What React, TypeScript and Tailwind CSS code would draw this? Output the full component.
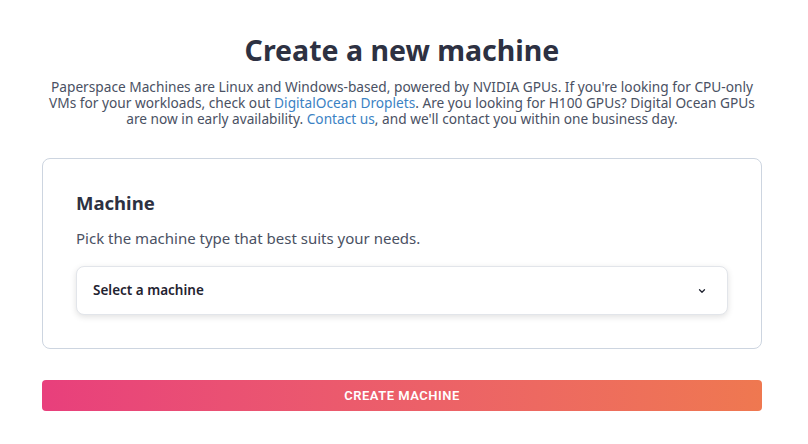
import React from "react";

export default function App() {
  return (
    <div className="min-h-[444px] w-[808px] bg-white" style={{ fontFamily: '"Noto Sans", "Open Sans", sans-serif' }}>
      <div className="ml-[42px] w-[720px] pt-[30px]">
        <h1 className="text-center text-[28.5px] leading-[40px] font-bold text-[#2d3142]">Create a new machine</h1>
        <p className="mt-[9px] text-center text-[13.7px] leading-[16px] text-[#4a5163]">
          Paperspace Machines are Linux and Windows-based, powered by NVIDIA GPUs. If you're looking for CPU-only VMs for your workloads, check out{" "}
          <a className="text-[#3b82c4]">DigitalOcean Droplets</a>. Are you looking for H100 GPUs? Digital Ocean GPUs are now in early availability.{" "}
          <a className="text-[#3b82c4]">Contact us</a>, and we'll contact you within one business day.
        </p>
        <div className="mt-[31px] rounded-[8px] border border-[#cdd5e0] px-[33px] pt-[30px] pb-[33px]">
          <h2 className="text-[18.5px] leading-[28px] font-bold text-[#2d3142]">Machine</h2>
          <p className="mt-[11px] text-[15px] leading-[20px] text-[#4a5163]">Pick the machine type that best suits your needs.</p>
          <div className="mt-[18px] flex h-[49px] items-center justify-between rounded-[8px] border border-[#e2e5ea] bg-white pl-[16px] pr-[20px] shadow-[0_2px_6px_rgba(0,0,0,0.12)]">
            <span className="text-[13.5px] font-semibold text-[#1f2330]">Select a machine</span>
            <svg width="10" height="10" viewBox="0 0 24 24" fill="none" stroke="#1f2330" strokeWidth="3" strokeLinecap="round" strokeLinejoin="round">
              <path d="M6 9l6 6 6-6" />
            </svg>
          </div>
        </div>
        <button
          className="mt-[31px] flex h-[31px] w-full items-center justify-center rounded-[4px] bg-gradient-to-r from-[#e83f7c] to-[#ef7850] text-[13px] font-semibold tracking-[0.5px] text-white"
          style={{ fontFamily: 'Roboto, "Liberation Sans", sans-serif' }}
        >
          CREATE MACHINE
        </button>
      </div>
    </div>
  );
}
